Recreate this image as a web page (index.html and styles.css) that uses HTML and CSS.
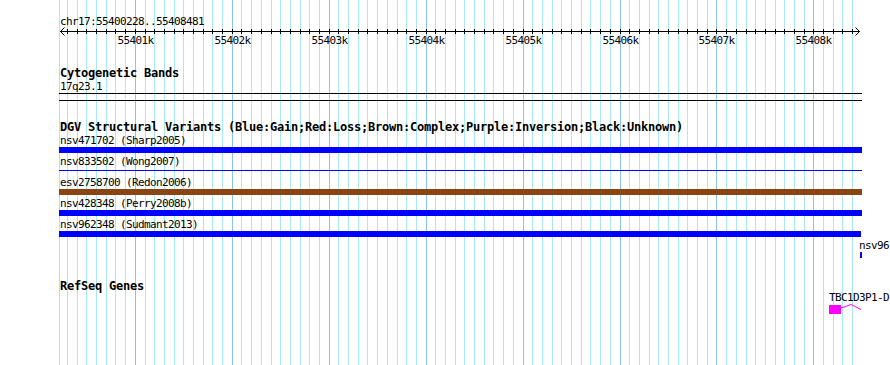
FILE: index.html
```html
<!DOCTYPE HTML>
<html>
	<head>
		<meta charset="utf-8">
		<title>chr17:55400228..55408481</title>
		<link rel="stylesheet" href="styles.css">
	</head>
	<body>
		<div class="panel">
			<svg class="grid" id="grid" width="890" height="365"></svg>

			<div class="ruler">
				<div class="label">chr17:55400228..55408481</div>
				<svg class="scale" id="scale" width="890" height="20"></svg>
			</div>

			<div class="track cyto">
				<div class="track-title">Cytogenetic Bands</div>
				<div class="label pad">17q23.1</div>
				<div class="band" style="margin-left:59px;width:803px"></div>
			</div>

			<div class="track dgv">
				<div class="track-title">DGV Structural Variants (Blue:Gain;Red:Loss;Brown:Complex;Purple:Inversion;Black:Unknown)</div>
				<div class="feature">
					<div class="label pad">nsv471702 (Sharp2005)</div>
					<div class="slot"><div class="bar gain" style="margin-left:59px;width:803px"></div></div>
				</div>
				<div class="feature">
					<div class="label pad">nsv833502 (Wong2007)</div>
					<div class="slot"><div class="bar gain thin" style="margin-left:59px;width:803px"></div></div>
				</div>
				<div class="feature">
					<div class="label pad">esv2758700 (Redon2006)</div>
					<div class="slot"><div class="bar complex" style="margin-left:59px;width:803px"></div></div>
				</div>
				<div class="feature">
					<div class="label pad">nsv428348 (Perry2008b)</div>
					<div class="slot"><div class="bar gain" style="margin-left:59px;width:803px"></div></div>
				</div>
				<div class="feature">
					<div class="label pad">nsv962348 (Sudmant2013)</div>
					<div class="slot"><div class="bar gain" style="margin-left:59px;width:802px"></div></div>
				</div>
				<!-- label runs off the right edge of the panel, only the visible part is kept -->
				<div class="feature">
					<div class="label" style="padding-left:859px">nsv96</div>
					<div class="slot"><div class="bar gain" style="margin-left:860px;width:2px"></div></div>
				</div>
			</div>

			<div class="track refseq">
				<div class="track-title">RefSeq Genes</div>
				<div class="gene" style="padding-left:829px">
					<div class="label gene-name">TBC1D3P1-D</div>
					<svg class="gene-model" width="61" height="14">
						<rect class="exon" x="0" y="2" width="12" height="9"></rect>
						<polyline class="intron" points="12,5 22,1.5 32,6.5"></polyline>
					</svg>
				</div>
			</div>
		</div>

		<script language="javascript" type="text/javascript">
			var segStart=55400228;
			var segEnd=55408481;
			var pxLeft=60;
			var pxWidth=800;
			var SVGNS="http://www.w3.org/2000/svg";

			function xpos(p)
			{
				return Math.round(pxLeft + (p - segStart) * pxWidth / (segEnd - segStart));
			}
			function addEl(parent, name, attrs, text)
			{
				var el=document.createElementNS(SVGNS, name);
				for (var k in attrs) el.setAttribute(k, attrs[k]);
				if (text) el.textContent=text;
				parent.appendChild(el);
				return el;
			}

			var grid=document.getElementById('grid');
			var scale=document.getElementById('scale');

			/* left edge line */
			addEl(grid, 'rect', {x:59, y:0, width:1, height:365, 'class':'minor'});

			for (var p=55400300; p<=55408400; p+=100){
				var x=xpos(p);
				var major=(p % 1000 == 0);
				addEl(grid, 'rect', {x:x, y:0, width:1, height:365, 'class': major ? 'major' : 'minor'});
				addEl(scale, 'rect', {x:x, y:1, width:1, height:5, 'class':'tick'});
				if (major){
					addEl(scale, 'text', {x:x + 0.5, y:16, 'text-anchor':'middle', 'class':'ticklabel'}, (p/1000) + 'k');
				}
			}

			/* ruler line with arrows on both ends */
			addEl(scale, 'rect', {x:60, y:3, width:800, height:1, 'class':'tick'});
			addEl(scale, 'path', {d:'M64.5 -0.5 L60.5 3.5 L64.5 7.5', 'class':'arrow'});
			addEl(scale, 'path', {d:'M855.5 -0.5 L859.5 3.5 L855.5 7.5', 'class':'arrow'});
		</script>
	</body>
</html>
```

FILE: styles.css
```css
* {
	box-sizing: border-box;
}
html, body {
	margin: 0;
	padding: 0;
	background-color: #ffffff;
	overflow: hidden;
}
.panel {
	position: relative;
	width: 890px;
	height: 365px;
	overflow: hidden;
	white-space: nowrap;
	color: #000000;
}
/* vertical grid lines behind everything */
.grid {
	position: absolute;
	top: 0;
	left: 0;
	z-index: 0;
}
.grid .minor {
	fill: #a8e8f0;
}
.grid .major {
	fill: #88c4ec;
}

.ruler, .track {
	position: relative;
	z-index: 1;
}
.ruler {
	padding-top: 15px;
	padding-left: 60px;
}
.scale {
	display: block;
	margin-left: -60px;
	overflow: visible;
}
.scale .tick {
	fill: #000000;
}
.scale .arrow {
	fill: none;
	stroke: #000000;
	stroke-width: 1;
}
.ticklabel {
	font-family: "DejaVu Sans Mono", monospace;
	font-size: 11px;
	letter-spacing: -0.62px;
	fill: #000000;
}

.label {
	font-family: "DejaVu Sans Mono", monospace;
	font-size: 11px;
	line-height: 13px;
	height: 13px;
	letter-spacing: -0.62px;
}
.pad {
	padding-left: 60px;
}
.track-title {
	padding-left: 60px;
	font-family: "DejaVu Sans Mono", monospace;
	font-weight: bold;
	font-size: 12px;
	line-height: 13px;
	height: 13px;
	letter-spacing: -0.225px;
}

.cyto {
	margin-top: 19px;
}
.band {
	height: 8px;
	border-top: 1px solid #000000;
	border-bottom: 1px solid #000000;
}

.dgv {
	margin-top: 20px;
}
.feature {
	height: 21px;
}
.slot {
	height: 6px;
}
.bar {
	height: 6px;
}
.bar.thin {
	height: 1px;
	margin-top: 2px;
}
.gain {
	background-color: #0000ff;
}
.complex {
	background-color: #8b4513;
}

.refseq {
	margin-top: 20px;
}
.gene-name {
	line-height: 10px;
	height: 10px;
}
.gene-model {
	display: block;
}
.exon {
	fill: #ff00ff;
}
.intron {
	fill: none;
	stroke: #ff00ff;
	stroke-width: 1;
}
```
